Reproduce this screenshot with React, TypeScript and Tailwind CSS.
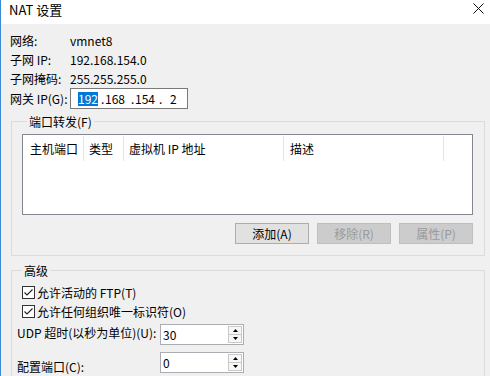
import React from "react";

const Check = () => (
  <span className="w-[13px] h-[13px] border border-[#333333] bg-white flex items-center justify-center shrink-0">
    <svg width="11" height="11" viewBox="0 0 11 11">
      <path d="M1.5 5.5 L4 8 L9.5 2.5" fill="none" stroke="#222222" strokeWidth="1.1" />
    </svg>
  </span>
);

const Spin = ({ value }: { value: string }) => (
  <div className="w-[84px] h-[21px] border border-[#abadb3] bg-white flex">
    <span className="flex-1 pl-[2px] leading-[19px]">{value}</span>
    <div className="w-[14px] my-[1px] mr-[1px] flex flex-col">
      <span className="flex-1 border border-[#c8c8c8] bg-[#f7f7f7] flex items-center justify-center">
        <svg width="5" height="3" viewBox="0 0 5 3">
          <path d="M0 3 L2.5 0 L5 3Z" fill="#000" />
        </svg>
      </span>
      <span className="flex-1 border border-t-0 border-[#c8c8c8] bg-[#f7f7f7] flex items-center justify-center">
        <svg width="5" height="3" viewBox="0 0 5 3">
          <path d="M0 0 L2.5 3 L5 0Z" fill="#000" />
        </svg>
      </span>
    </div>
  </div>
);

const Btn = ({ label, disabled }: { label: string; disabled?: boolean }) => (
  <button
    className={
      disabled
        ? "w-[74px] h-[21px] border border-[#bfbfbf] bg-[#cccccc] text-[#9a9a9a] leading-[19px]"
        : "w-[74px] h-[21px] border border-[#adadad] bg-[#e1e1e1] text-black leading-[19px]"
    }
  >
    {label}
  </button>
);

const columns = [
  { label: "主机端口", w: "w-[61px] pl-[7px]" },
  { label: "类型", w: "w-[40px] pl-[5px]" },
  { label: "虚拟机 IP 地址", w: "w-[160px] pl-[5px]" },
  { label: "描述", w: "w-[160px] pl-[6px]" },
];

export default function App() {
  return (
    <div className="w-[490px] h-[376px] overflow-hidden bg-[#f0f0f0] border-l border-[#3c8ad6] text-[12px] leading-[16px] text-black font-['Noto_Sans_CJK_SC',sans-serif]">
      {/* title bar */}
      <div className="h-[24px] bg-white flex justify-between items-start">
        <span className="pl-[8px] pt-[1px] text-[13px] leading-[17px]">NAT 设置</span>
        <svg width="11" height="11" viewBox="0 0 11 11" className="mt-[3px] mr-[6px]">
          <path d="M0.5 0.5 L10.5 10.5 M10.5 0.5 L0.5 10.5" stroke="#111" strokeWidth="1" />
        </svg>
      </div>

      {/* info rows */}
      <div className="pt-[7px] pl-[9px] grid grid-cols-[60px_1fr]">
        <span className="h-[19px] leading-[19px]">网络:</span>
        <span className="h-[19px] leading-[19px]">vmnet8</span>
        <span className="h-[19px] leading-[19px]">子网 IP:</span>
        <span className="h-[19px] leading-[19px]">192.168.154.0</span>
        <span className="h-[19px] leading-[19px]">子网掩码:</span>
        <span className="h-[19px] leading-[19px]">255.255.255.0</span>
        <span className="h-[21px] leading-[21px]">网关 IP(G):</span>
        <div className="w-[118px] h-[21px] border border-[#7a7a7a] bg-white flex items-center">
          <span className="ml-[7px] w-[20px] bg-[#0078d7] text-white text-center leading-[14px]">192</span>
          <span className="w-[7px] pl-[3px]">.</span>
          <span className="w-[22px]">168</span>
          <span className="w-[8px] pl-[4px]">.</span>
          <span className="w-[22px]">154</span>
          <span className="w-[13px] pl-[2px]">.</span>
          <span>2</span>
        </div>
      </div>

      {/* port forwarding */}
      <fieldset className="ml-[10px] mt-[3px] w-[474px] border border-[#dcdcdc] pl-[10px] pr-[11px] pb-[11px]">
        <legend className="ml-[5px] px-[2px] pt-[2px]">端口转发(F)</legend>
        <div className="mt-[4px] h-[81px] border border-[#828790] bg-white">
          <div className="mt-[1px] h-[25px] flex">
            {columns.map((c) => (
              <div key={c.label} className={`${c.w} border-r border-[#e5e5e5] flex items-center`}>
                {c.label}
              </div>
            ))}
          </div>
        </div>
        <div className="mt-[8px] flex justify-end gap-[8px]">
          <Btn label="添加(A)" />
          <Btn label="移除(R)" disabled />
          <Btn label="属性(P)" disabled />
        </div>
      </fieldset>

      {/* advanced */}
      <fieldset className="ml-[10px] mt-[5px] w-[474px] h-[140px] border border-[#dcdcdc] pl-[5px] pr-[11px]">
        <legend className="ml-[5px] px-[2px] pt-[2px]">高级</legend>
        <div className="pt-[4px] pl-[5px]">
          <div className="h-[19px] flex items-center gap-[2px]">
            <Check />
            <span>允许活动的 FTP(T)</span>
          </div>
          <div className="h-[19px] flex items-center gap-[2px]">
            <Check />
            <span>允许任何组织唯一标识符(O)</span>
          </div>
        </div>
        <div className="mt-[3px] grid grid-cols-[143px_1fr] gap-y-[7px]">
          <span className="pt-[1px]">UDP 超时(以秒为单位)(U):</span>
          <Spin value="30" />
          <span className="pt-[7px]">配置端口(C):</span>
          <Spin value="0" />
        </div>
      </fieldset>
    </div>
  );
}
